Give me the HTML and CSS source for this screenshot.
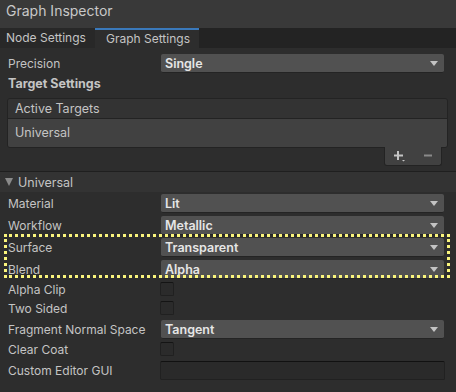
FILE: index.html
```html
<!doctype html>
<html lang="en">
<head>
<meta charset="UTF-8">
<title>Graph Inspector</title>
<link rel="stylesheet" href="styles.css">
</head>
<body>

<!-- title -->
<div class="title">Graph Inspector</div>

<!-- tabs -->
<div class="tabs">
  <div class="tab">Node Settings</div>
  <div class="tab active">Graph Settings</div>
</div>

<div class="panel">
  <div class="row drop-row">
    <div class="label">Precision</div>
    <div class="dropdown"><span>Single</span><i class="arrow"></i></div>
  </div>
  <div class="section-title">Target Settings</div>

  <!-- active targets list -->
  <div class="list">
    <div class="list-head">Active Targets</div>
    <div class="list-body">Universal</div>
  </div>
  <div class="list-foot">
    <svg width="14" height="12" viewBox="0 0 14 12"><path d="M5 1v9M1 5.5h9" stroke="#c4c4c4" stroke-width="2"/><path d="M9 10h3l-1.5 1.5z" fill="#c4c4c4"/></svg>
    <svg width="10" height="12" viewBox="0 0 10 12"><path d="M1 5.5h8" stroke="#8a8a8a" stroke-width="2"/></svg>
  </div>
</div>

<div class="foldout"><i class="fold-arrow"></i>Universal</div>

<div class="panel props">
  <div class="row drop-row">
    <div class="label">Material</div>
    <div class="dropdown"><span>Lit</span><i class="arrow"></i></div>
  </div>
  <div class="row drop-row">
    <div class="label">Workflow</div>
    <div class="dropdown"><span>Metallic</span><i class="arrow"></i></div>
  </div>
  <div class="highlight">
    <div class="row drop-row">
      <div class="label">Surface</div>
      <div class="dropdown"><span>Transparent</span><i class="arrow"></i></div>
    </div>
    <div class="row drop-row">
      <div class="label">Blend</div>
      <div class="dropdown"><span>Alpha</span><i class="arrow"></i></div>
    </div>
  </div>
  <div class="row check-row">
    <div class="label">Alpha Clip</div>
    <div class="checkbox"></div>
  </div>
  <div class="row check-row">
    <div class="label">Two Sided</div>
    <div class="checkbox"></div>
  </div>
  <div class="row drop-row">
    <div class="label">Fragment Normal Space</div>
    <div class="dropdown"><span>Tangent</span><i class="arrow"></i></div>
  </div>
  <div class="row check-row">
    <div class="label">Clear Coat</div>
    <div class="checkbox"></div>
  </div>
  <div class="row field-row">
    <div class="label">Custom Editor GUI</div>
    <div class="textfield"></div>
  </div>
</div>

</body>
</html>
```

FILE: styles.css
```css
html,body{margin:0;padding:0}
body{
  width:456px;height:392px;overflow:hidden;
  background:#2d2d2d;
  font-family:Inter,"Noto Sans",sans-serif;font-size:12px;color:#c4c4c4}

/* ---- title / tabs ---------------------------------------------- */
.title{height:28px;line-height:22px;padding-left:6px;background:#393939;font-size:14px;color:#c8c8c8}
.tabs{display:flex;height:20px;background:#232323}
.tab{width:95px;box-sizing:border-box;padding:0 6px;line-height:20px;background:#282828;font-size:12px;color:#c4c4c4}
.tab.active{width:104px;background:#2d2d2d;border-top:2px solid #3a79bb;line-height:18px;padding:0 0 0 11px}

/* ---- panel rows ------------------------------------------------ */
.panel{padding:6px 12px 0 8px}
.row{display:grid;grid-template-columns:153px 1fr;align-items:center}
.drop-row{height:19px;margin-bottom:3px}
.check-row{height:17px;margin-bottom:2px;align-items:start}
.field-row{height:19px}
.label{white-space:nowrap}

.dropdown{
  display:flex;align-items:center;justify-content:space-between;
  height:18px;padding:0 6px 0 4px;
  background:#515151;border-bottom:1px solid #242424;border-radius:2px;
  color:#e6e6e6;font-weight:600;font-size:12.5px}
.arrow{width:0;height:0;border-left:4px solid transparent;border-right:4px solid transparent;border-top:5px solid #c4c4c4}

.checkbox{width:12px;height:12px;background:#2b2b2b;border:1px solid #202020;border-top-color:#141414;border-radius:2px;margin-left:-1px}
.textfield{height:17px;background:#2a2a2a;border:1px solid #212121;border-top-color:#111;border-radius:2px;margin-left:-1px;margin-right:-1px}

.section-title{font-weight:700;font-size:12.5px;margin:0;line-height:16px}

/* ---- active targets list --------------------------------------- */
.list{margin:6px -4px 0 -1px;border:1px solid #232323;border-radius:3px;overflow:hidden}
.list-head{height:19px;line-height:19px;padding-left:7px;background:#333;border-bottom:1px solid #232323;font-size:12.5px}
.list-body{height:28px;line-height:27px;padding-left:7px;background:#414141;font-size:12.5px}
.list-foot{
  display:flex;align-items:center;justify-content:space-around;
  width:56px;height:18px;margin:-1px 2px 0 auto;
  background:#414141;border:1px solid #232323;border-top:none;border-radius:0 0 3px 3px}

/* ---- foldout --------------------------------------------------- */
.foldout{
  display:flex;align-items:center;gap:5px;
  height:20px;margin-top:5px;padding-left:5px;
  background:#333;border-top:1px solid #1f1f1f;font-size:12.5px}
.fold-arrow{width:0;height:0;border-left:4px solid transparent;border-right:4px solid transparent;border-top:8px solid #8a8a8a}

.props{padding-top:2px}

/* dotted highlight around surface / blend */
.highlight{position:relative}
.highlight::before{
  content:"";position:absolute;top:-4px;bottom:1px;left:-4px;right:-6px;
  border:3px dotted #f9f47c;pointer-events:none}
```
